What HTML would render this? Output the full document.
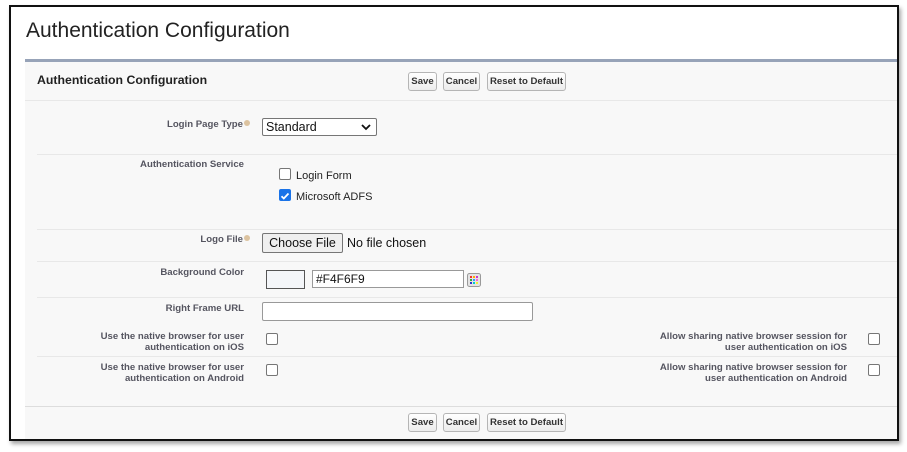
<!DOCTYPE html>
<html><head><style>
*{margin:0;padding:0;box-sizing:border-box}
body{width:907px;height:452px;background:#fff;position:relative;overflow:hidden;font-family:"Liberation Sans",Arial,sans-serif}
.a{position:absolute}
.frame{left:9px;top:5px;width:890px;height:436px;border:2px solid #111;box-shadow:2px 3px 4px rgba(0,0,0,.35)}
.panel{left:25px;top:59px;width:872px;height:380px;background:#f8f8f8;border-top:3px solid #97a3b8}
.hr{height:1px;background:#e8e8e8}
.lbl{font-size:9.6px;font-weight:bold;color:#555560;text-align:right;line-height:11px}
.btn{font-size:9.6px;font-weight:bold;color:#333;border:1px solid #b5b5b5;border-radius:3px;background:linear-gradient(#fff,#ececec);height:19px;line-height:17px;text-align:center}
.cb{width:12px;height:12px;border:1px solid #767676;border-radius:2px;background:#fff}
.t{font-size:11px;color:#222}
.help{display:inline-block;width:6px;height:6px;border-radius:50%;background:#dcc3a0;margin-left:1px;vertical-align:1px}
</style></head><body>
<div class="a frame"></div>
<div class="a" style="left:26px;top:19px;font-size:21px;color:#222">Authentication Configuration</div>
<div class="a panel"></div>
<div class="a" style="left:37px;top:73px;font-size:12.3px;font-weight:bold;color:#222">Authentication Configuration</div>
<div class="a btn" style="left:408px;top:72px;width:29px">Save</div>
<div class="a btn" style="left:443px;top:72px;width:37px">Cancel</div>
<div class="a btn" style="left:487px;top:72px;width:79px">Reset to Default</div>
<div class="a hr" style="left:25px;top:100px;width:872px"></div>

<div class="a lbl" style="left:60px;top:119px;width:190px">Login Page Type<span class="help"></span></div>
<div class="a" style="left:262px;top:118px;width:115px;height:18px;border:1px solid #767676;border-radius:2px;background:#fff;font-size:12.5px;line-height:16px;padding-left:3px;color:#111">Standard
<svg class="a" style="right:5px;top:5px" width="10" height="7" viewBox="0 0 10 7"><path d="M1 1l4 4 4-4" stroke="#111" stroke-width="1.8" fill="none"/></svg></div>
<div class="a hr" style="left:37px;top:154px;width:860px"></div>

<div class="a lbl" style="left:60px;top:159px;width:184px">Authentication Service</div>
<div class="a cb" style="left:279px;top:168px"></div>
<div class="a t" style="left:296px;top:170px">Login Form</div>
<div class="a" style="left:279px;top:189px;width:12px;height:12px;border-radius:2px;background:#1a73e8"><svg width="12" height="12" viewBox="0 0 12 12"><path d="M2.5 6.2l2.3 2.3 4.7-5" stroke="#fff" stroke-width="1.8" fill="none"/></svg></div>
<div class="a t" style="left:296px;top:191px">Microsoft ADFS</div>
<div class="a hr" style="left:37px;top:229px;width:860px"></div>

<div class="a lbl" style="left:60px;top:234px;width:190px">Logo File<span class="help"></span></div>
<div class="a" style="left:262px;top:233px;width:81px;height:20px;border:1px solid #767676;border-radius:2px;background:#efefef;font-size:12.5px;line-height:18px;text-align:center;color:#111">Choose File</div>
<div class="a" style="left:347px;top:236px;font-size:12.5px;color:#111">No file chosen</div>
<div class="a hr" style="left:37px;top:261px;width:860px"></div>

<div class="a lbl" style="left:60px;top:267px;width:184px">Background Color</div>
<div class="a" style="left:266px;top:270px;width:39px;height:19px;border:1px solid #555;background:#f4f6f9"></div>
<div class="a" style="left:312px;top:270px;width:152px;height:18px;border:1px solid #999;background:#fff;font-size:12px;line-height:16px;padding-left:3px;color:#111">#F4F6F9</div>
<svg class="a" style="left:467px;top:273px" width="14" height="14" viewBox="0 0 14 14"><rect x="0.5" y="0.5" width="13" height="13" rx="2" fill="#e4e4e4" stroke="#999"/><rect x="3" y="3" width="2" height="2" fill="#e33"/><rect x="6" y="3" width="2" height="2" fill="#fa0"/><rect x="9" y="3" width="2" height="2" fill="#c3c"/><rect x="3" y="6" width="2" height="2" fill="#3a3"/><rect x="6" y="6" width="2" height="2" fill="#39f"/><rect x="9" y="6" width="2" height="2" fill="#f6c"/><rect x="3" y="9" width="2" height="2" fill="#33c"/><rect x="6" y="9" width="2" height="2" fill="#0cc"/><rect x="9" y="9" width="2" height="2" fill="#ee3"/></svg>
<div class="a hr" style="left:37px;top:297px;width:860px"></div>

<div class="a lbl" style="left:60px;top:303px;width:184px">Right Frame URL</div>
<div class="a" style="left:262px;top:302px;width:271px;height:19px;border:1px solid #999;border-radius:2px;background:#fff"></div>

<div class="a lbl" style="left:40px;top:331px;width:204px">Use the native browser for user<br>authentication on iOS</div>
<div class="a cb" style="left:266px;top:333px"></div>
<div class="a lbl" style="left:600px;top:331px;width:247px">Allow sharing native browser session for<br>user authentication on iOS</div>
<div class="a cb" style="left:868px;top:333px"></div>
<div class="a hr" style="left:37px;top:356px;width:860px"></div>

<div class="a lbl" style="left:40px;top:362px;width:204px">Use the native browser for user<br>authentication on Android</div>
<div class="a cb" style="left:266px;top:364px"></div>
<div class="a lbl" style="left:600px;top:362px;width:247px">Allow sharing native browser session for<br>user authentication on Android</div>
<div class="a cb" style="left:868px;top:364px"></div>

<div class="a hr" style="left:25px;top:406px;width:872px;background:#ddd"></div>
<div class="a btn" style="left:408px;top:413px;width:29px">Save</div>
<div class="a btn" style="left:443px;top:413px;width:37px">Cancel</div>
<div class="a btn" style="left:487px;top:413px;width:79px">Reset to Default</div>
</body></html>
